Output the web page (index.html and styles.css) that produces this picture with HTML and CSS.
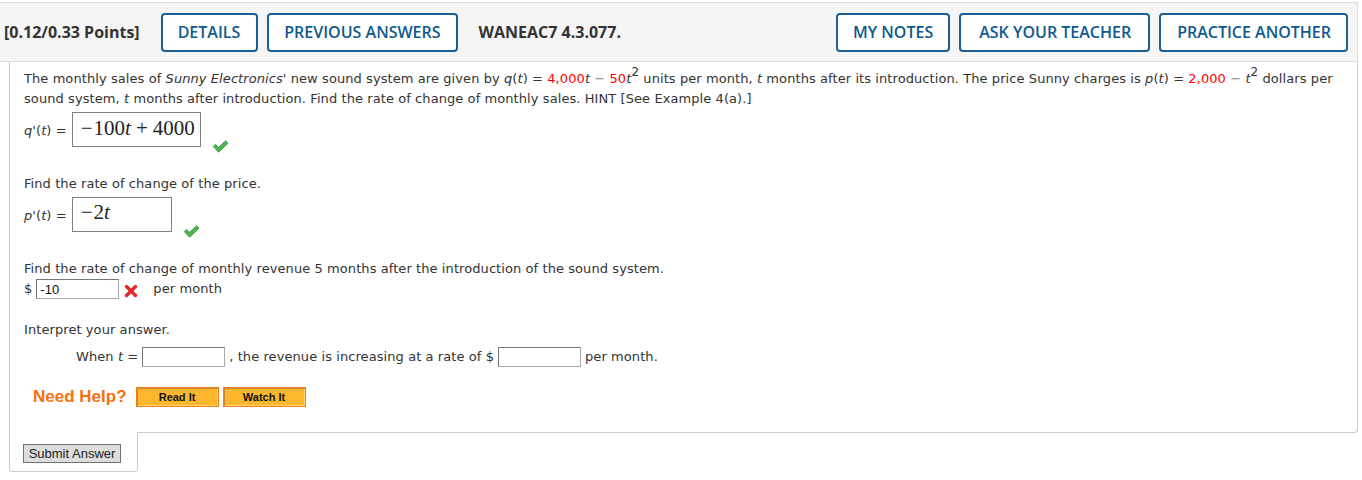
FILE: index.html
```html
<!DOCTYPE html>
<html>
<head>
<meta charset="utf-8">
<link rel="stylesheet" href="styles.css">
</head>
<body>
<div class="page">
  <div class="header">
    <span class="points">[0.12/0.33 Points]</span>
    <button class="hbtn first">DETAILS</button>
    <button class="hbtn">PREVIOUS ANSWERS</button>
    <span class="qid">WANEAC7 4.3.077.</span>
    <span class="spacer"></span>
    <button class="hbtn">MY NOTES</button>
    <button class="hbtn ask">ASK YOUR TEACHER</button>
    <button class="hbtn last">PRACTICE ANOTHER</button>
  </div>
  <div class="qbody">
    <p class="intro">The monthly sales of <i>Sunny Electronics</i>' new sound system are given by <i>q</i>(<i>t</i>) = <span class="red">4,000</span><i>t</i> <span class="minus">&minus;</span> <span class="red">50</span><i>t</i><sup>2</sup> units per month, <i>t</i> months after its introduction. The price Sunny charges is <i>p</i>(<i>t</i>) = <span class="red">2,000</span> <span class="minus">&minus;</span> <i>t</i><sup>2</sup> dollars per sound system, <i>t</i> months after introduction. Find the rate of change of monthly sales. HINT [See Example 4(a).]</p>
    <div class="mrow first-m">
      <span class="lbl"><i>q</i>'(<i>t</i>) =</span>
      <span class="mbox wide"><span class="mop">&minus;</span>100<i>t</i><span class="bin">+</span>4000</span>
      <svg class="check" width="17" height="13" viewBox="0 0 17 13"><path d="M1.2 6.6 L3.6 4.4 L6.6 7.3 L13.6 0.8 L16 3.2 L6.6 12.2 Z" fill="#52b552" stroke="#2f8f35" stroke-width="0.8" stroke-linejoin="round"/></svg>
    </div>
    <p class="q q2">Find the rate of change of the price.</p>
    <div class="mrow">
      <span class="lbl"><i>p</i>'(<i>t</i>) =</span>
      <span class="mbox narrow"><span class="mop">&minus;</span>2<i>t</i></span>
      <svg class="check" width="17" height="13" viewBox="0 0 17 13"><path d="M1.2 6.6 L3.6 4.4 L6.6 7.3 L13.6 0.8 L16 3.2 L6.6 12.2 Z" fill="#52b552" stroke="#2f8f35" stroke-width="0.8" stroke-linejoin="round"/></svg>
    </div>
    <p class="q q3">Find the rate of change of monthly revenue 5 months after the introduction of the sound system.</p>
    <div class="arow">
      <span>$</span>
      <input class="ans" type="text" value="-10">
      <svg class="cross" width="14" height="14" viewBox="0 0 14 14"><path d="M2.5 2.5 L11.5 11.5 M11.5 2.5 L2.5 11.5" stroke="#e8262b" stroke-width="3.4" stroke-linecap="round"/></svg>
      <span class="pm">per month</span>
    </div>
    <p class="q q4">Interpret your answer.</p>
    <div class="wrow">
      <span>When <i>t</i> =</span>
      <input class="ans" type="text" value="">
      <span>, the revenue is increasing at a rate of $</span>
      <input class="ans" type="text" value="">
      <span>per month.</span>
    </div>
    <div class="help">
      <span class="need">Need Help?</span>
      <button class="obtn">Read It</button>
      <button class="obtn">Watch It</button>
    </div>
  </div>
  <div class="tab">
    <button class="submit">Submit Answer</button>
  </div>
</div>
</body>
</html>
```

FILE: styles.css
```css
* { box-sizing: border-box; }
body {
  margin: 0;
  background: #fff;
  font-family: "DejaVu Sans", Verdana, sans-serif;
  font-size: 13px;
  color: #333;
}
.page {
  width: 1358px;
  padding-top: 2px;
}
.header {
  display: flex;
  align-items: center;
  height: 60px;
  background: #f5f5f5;
  border-top: 1px solid #ddd;
  border-bottom: 1px solid #ddd;
  border-right: 1px solid #ddd;
  padding-left: 4px;
  font-family: "Open Sans", sans-serif;
}
.points {
  font-weight: 700;
  font-size: 16px;
  color: #333;
}
.hbtn {
  height: 39px;
  padding: 0 15px;
  border: 2px solid #1c5f94;
  border-radius: 4px;
  background: #fff;
  color: #0e5a8d;
  font-family: "Open Sans", sans-serif;
  font-weight: 600;
  font-size: 16px;
  margin-left: 9px;
}
.hbtn.first { margin-left: 21px; padding: 0 16px 0 15px; }
.hbtn.ask { padding: 0 17px 0 18px; }
.hbtn.last { margin-right: 9px; padding: 0 15px 0 16px; }
.qid {
  margin-left: 21px;
  font-weight: 700;
  font-size: 16px;
  color: #333;
}
.spacer { flex: 1; }

.qbody {
  margin-left: 9px;
  width: 1349px;
  border-left: 1px solid #ccc;
  border-right: 1px solid #ccc;
  border-bottom: 1px solid #ccc;
  border-radius: 0 0 4px 0;
  padding: 7px 14px 25px 14px;
  line-height: 20px;
  letter-spacing: 0.08px;
}
.intro { margin: 0; }
.red { color: #f00; }
.minus { color: #888; }
sup {
  font-size: 12px;
  line-height: 0;
  vertical-align: 7px;
}
.mrow {
  display: flex;
  align-items: center;
  margin-top: 3px;
}
.lbl { margin-right: 5px; margin-top: 3px; }
.mbox {
  display: flex;
  align-items: center;
  height: 35px;
  border: 1px solid #808080;
  padding: 0 8px 3px 8px;
  font-family: "Liberation Serif", "Times New Roman", serif;
  font-size: 21px;
  letter-spacing: 0;
  color: #222;
}
.mbox.wide { width: 129px; }
.mbox.narrow { width: 100px; align-items: flex-start; padding-top: 4px; }
.mop { margin-right: 1px; }
.bin { margin: 0 5px; }
.check {
  align-self: flex-end;
  margin-bottom: -6px;
  margin-left: 11px;
}
.q { margin: 0; }
.q2 { margin-top: 27px; }
.q3 { margin-top: 27px; }
.q4 { margin-top: 21px; }
.arow {
  display: flex;
  align-items: center;
  height: 20px;
}
.ans {
  width: 83px;
  height: 20px;
  border: 1px solid #aaa;
  border-top-color: #777;
  border-left-color: #777;
  padding: 0 3px;
  font-family: "Liberation Sans", Arial, sans-serif;
  font-size: 13px;
  letter-spacing: 0;
  color: #111;
  margin: 0 0 0 4px;
}
.cross { margin-left: 5px; margin-top: 3px; }
.pm { margin-left: 15px; }
.wrow {
  display: flex;
  align-items: center;
  margin-top: 7px;
  padding-left: 52px;
  height: 20px;
}
.wrow .ans { margin-right: 4px; }
.help {
  display: flex;
  align-items: center;
  margin-top: 20px;
  margin-left: 9px;
  height: 20px;
}
.need {
  font-family: "Liberation Sans", Arial, sans-serif;
  font-weight: 700;
  font-size: 17px;
  letter-spacing: 0;
  color: #f7700c;
  margin-right: 9px;
}
.obtn {
  width: 83px;
  height: 20px;
  padding: 0;
  background: #fdb72e;
  border: 1px solid #ef7f1a;
  box-shadow: inset 1px 1px 0 #c58b2a, inset -1px -1px 0 #ffd46b;
  font-family: "Liberation Sans", Arial, sans-serif;
  font-weight: 700;
  font-size: 11px;
  letter-spacing: 0;
  color: #111;
  margin-right: 4px;
}
.tab {
  margin-left: 9px;
  margin-top: -1px;
  width: 129px;
  height: 40px;
  background: #fff;
  border-left: 1px solid #ccc;
  border-right: 1px solid #ccc;
  border-bottom: 1px solid #ccc;
  border-radius: 0 0 4px 4px;
  padding: 12px 0 0 13px;
}
.submit {
  width: 98px;
  height: 19px;
  padding: 0;
  background: #ddd;
  border: 1px solid #707070;
  font-family: "Liberation Sans", Arial, sans-serif;
  font-size: 13px;
  color: #222;
}
```
